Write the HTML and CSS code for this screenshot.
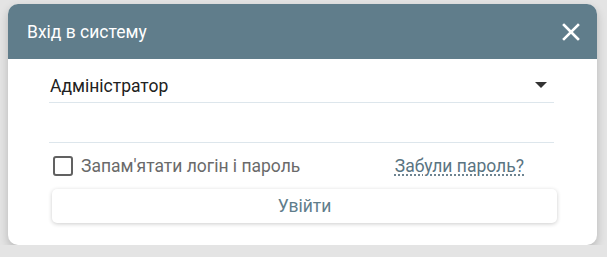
FILE: index.html
```html
<!DOCTYPE html>
<html lang="uk">
<head>
    <meta charset="UTF-8">
    <title>Вхід в систему</title>
    <link rel="stylesheet" href="styles.css">
</head>
<body>
    <div class="dialog">
        <div class="dialog-header">
            <span class="dialog-title">Вхід в систему</span>
            <span class="close-btn">
                <svg width="18" height="18" viewBox="0 0 18 18"><path d="M2 2L16 16M16 2L2 16" stroke="#fff" stroke-width="2.6" stroke-linecap="square"/></svg>
            </span>
        </div>
        <div class="dialog-body">
            <div class="field select-field">
                <span class="select-value">Адміністратор</span>
                <span class="select-arrow"></span>
            </div>
            <div class="field password-field"></div>
            <div class="remember-row">
                <label class="remember">
                    <span class="checkbox"></span>
                    <span>Запам'ятати логін і пароль</span>
                </label>
                <a class="forgot" href="#">Забули пароль?</a>
            </div>
            <button class="btn">Увійти</button>
        </div>
    </div>
</body>
</html>
```

FILE: styles.css
```css
body {
    margin: 0;
    padding: 4px 10px 0 8px;
    background-color: #e4e4e4;
    font-family: Roboto, "Noto Sans", sans-serif;
}
.dialog {
    width: 589px;
    background: white;
    border-radius: 10px;
    box-shadow: 0 4px 10px rgba(0, 0, 0, 0.2);
    overflow: hidden;
}
.dialog-header {
    height: 55px;
    background-color: #607d8b;
    display: flex;
    align-items: center;
    justify-content: space-between;
    padding: 0 17px 0 19px;
}
.dialog-title {
    color: white;
    font-size: 17.5px;
}
.close-btn {
    display: flex;
    cursor: pointer;
}
.dialog-body {
    padding: 0 43px 22px 41px;
}
.field {
    border-bottom: 1px solid #dde6ec;
}
.select-field {
    height: 44px;
    display: flex;
    align-items: flex-end;
    justify-content: space-between;
    padding: 0 7px 0 1px;
    box-sizing: border-box;
}
.select-value {
    font-size: 17.5px;
    color: #212121;
    padding-bottom: 6px;
}
.select-arrow {
    width: 0;
    height: 0;
    border-left: 6px solid transparent;
    border-right: 6px solid transparent;
    border-top: 6px solid #333;
    margin-bottom: 14px;
}
.password-field {
    height: 39px;
}
.remember-row {
    height: 46px;
    display: flex;
    align-items: center;
    justify-content: space-between;
    padding: 0 30px 0 4px;
}
.remember {
    display: flex;
    align-items: center;
    gap: 8px;
    font-size: 17.5px;
    color: #6a6a6a;
}
.checkbox {
    width: 16px;
    height: 16px;
    border: 2.5px solid #616161;
    border-radius: 3px;
}
.forgot {
    font-size: 17.5px;
    color: #5a7482;
    text-decoration: underline dotted;
    text-underline-offset: 3px;
}
.btn {
    display: block;
    width: 505px;
    height: 34px;
    margin: 0 0 0 3px;
    background: white;
    border: none;
    border-radius: 5px;
    box-shadow: 0 1px 4px rgba(0, 0, 0, 0.2);
    font-family: inherit;
    font-size: 17.5px;
    color: #607d8b;
    cursor: pointer;
}
```
